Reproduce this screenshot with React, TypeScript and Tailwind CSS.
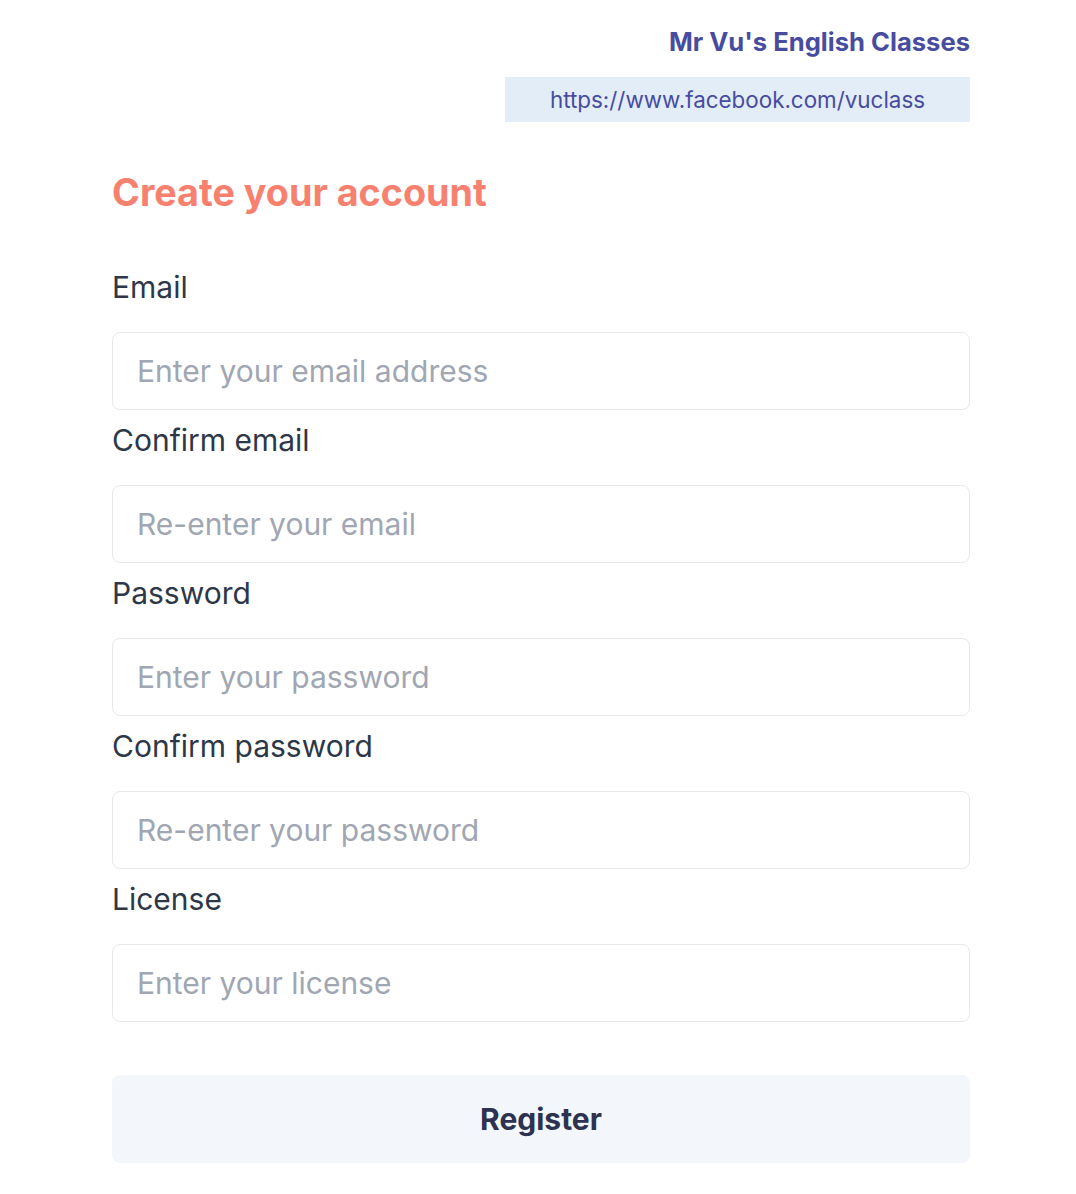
const fields = [
  { label: "Email", placeholder: "Enter your email address", type: "email" },
  { label: "Confirm email", placeholder: "Re-enter your email", type: "email" },
  { label: "Password", placeholder: "Enter your password", type: "password" },
  { label: "Confirm password", placeholder: "Re-enter your password", type: "password" },
  { label: "License", placeholder: "Enter your license", type: "text" },
];

export default function App() {
  return (
    <div className="min-h-screen bg-white font-['Inter',sans-serif]">
      <div className="ml-[112px] w-[858px] pt-[24px] pb-[30px]">
        <header className="flex flex-col items-end">
          <h1 className="text-[25.6px] leading-[36px] font-bold text-[#474c9f]">
            Mr Vu's English Classes
          </h1>
          <a
            href="#"
            className="mt-[17px] flex h-[45px] w-[465px] items-center justify-center bg-[#e3edf8] text-[22.4px] text-[#474c9f]"
          >
            https://www.facebook.com/vuclass
          </a>
        </header>

        <h2 className="mt-[46px] text-[37.7px] leading-[48px] font-bold text-[#f8806f]">
          Create your account
        </h2>

        <form className="mt-[49px]">
          {fields.map((f) => (
            <div key={f.label} className="mb-[8px]">
              <label className="block text-[30px] leading-[44px] text-[#2d3748]">{f.label}</label>
              <input
                type={f.type}
                placeholder={f.placeholder}
                className="mt-[23px] block h-[78px] w-full rounded-lg border border-[#e6e8ec] px-[24px] text-[30px] text-[#2d3748] outline-none placeholder:text-[#a0a6b2]"
              />
            </div>
          ))}
          <button
            type="button"
            className="mt-[45px] h-[88px] w-full rounded-lg bg-[#f3f7fb] text-[30px] font-bold text-[#2d3250]"
          >
            Register
          </button>
        </form>
      </div>
    </div>
  );
}
